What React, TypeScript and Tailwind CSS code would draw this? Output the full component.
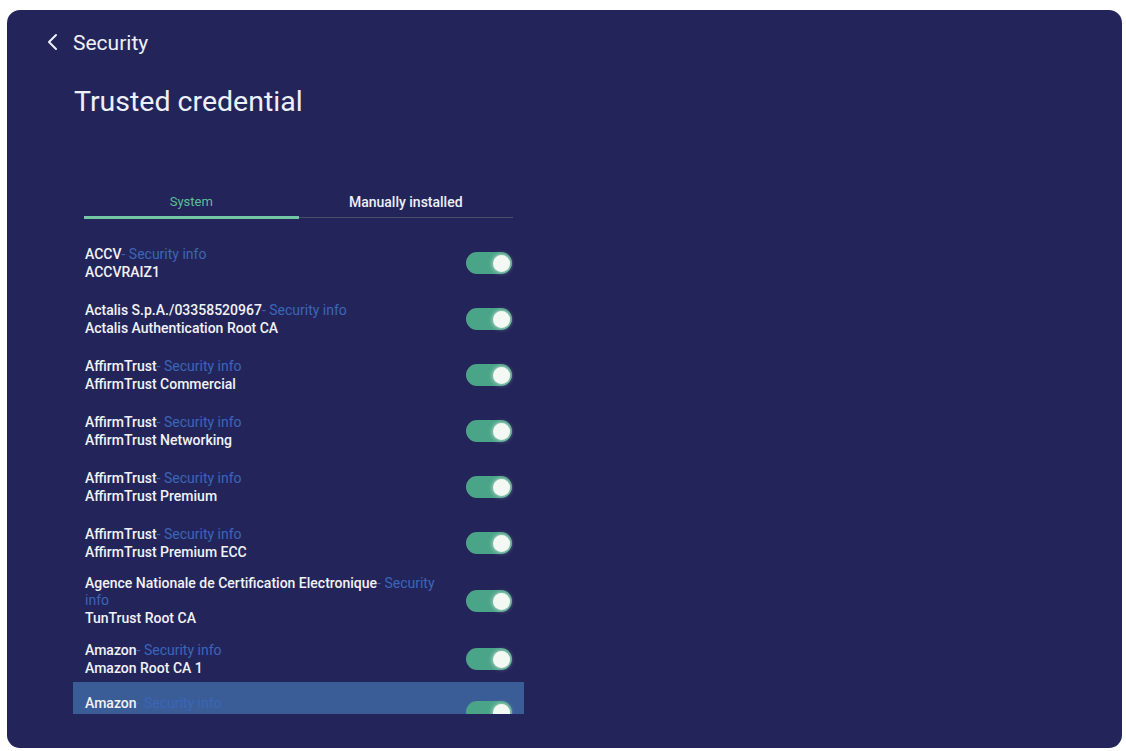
import React from "react";

type Credential = {
  issuer: string;
  name?: string;
};

const credentials: Credential[] = [
  { issuer: "ACCV", name: "ACCVRAIZ1" },
  { issuer: "Actalis S.p.A./03358520967", name: "Actalis Authentication Root CA" },
  { issuer: "AffirmTrust", name: "AffirmTrust Commercial" },
  { issuer: "AffirmTrust", name: "AffirmTrust Networking" },
  { issuer: "AffirmTrust", name: "AffirmTrust Premium" },
  { issuer: "AffirmTrust", name: "AffirmTrust Premium ECC" },
  { issuer: "Agence Nationale de Certification Electronique", name: "TunTrust Root CA" },
  { issuer: "Amazon", name: "Amazon Root CA 1" },
  { issuer: "Amazon" },
];

const Toggle: React.FC = () => (
  <div className="flex h-[22px] w-[46px] shrink-0 items-center justify-end rounded-full bg-[#4aa487] pr-[2px]">
    <div className="h-[17px] w-[17px] rounded-full bg-[#f4f8f2] shadow-[0_0_5px_rgba(255,255,255,0.75)]" />
  </div>
);

const CredentialRow: React.FC<{ item: Credential; focused?: boolean }> = ({ item, focused }) => (
  <div
    className={`flex min-h-[56px] items-center gap-4 px-[12px] ${
      focused ? "-mt-[5px] bg-[#3a5d97] pb-[4px] pt-[8px]" : "py-[4px]"
    }`}
  >
    <div className="flex-1 text-[14px] font-medium leading-[17px] text-[#f1f2f6]">
      <p>
        {item.issuer}
        <span className="font-normal text-[#3b66b8]">- Security info</span>
      </p>
      <p className="mt-[1px] h-[17px]">{item.name}</p>
    </div>
    <Toggle />
  </div>
);

export default function App() {
  return (
    <div className="h-[751px] w-[1126px] bg-white p-[7px] pt-[10px] pr-[4px] pb-[3px] font-['Roboto',sans-serif]">
      <div className="flex h-full flex-col rounded-[13px] bg-[#23255a] pl-[39px]">
        {/* header */}
        <div className="flex h-[66px] items-center pt-[1px]">
          <svg width="14" height="20" viewBox="0 0 14 20" fill="none" className="mt-[-2px]">
            <path d="M10 2 L3 9 L10 16" stroke="#eef0f8" strokeWidth="2" strokeLinecap="round" strokeLinejoin="round" />
          </svg>
          <span className="ml-[13px] text-[21px] text-[#eef0f8]">Security</span>
        </div>
        <h1 className="ml-[28px] mt-[10px] text-[28.5px] font-normal leading-[32px] text-[#eef0f8]">
          Trusted credential
        </h1>

        {/* tabs + list */}
        <div className="ml-[27px] mt-[75px] flex w-[451px] flex-col">
          <div className="mx-[11px] flex leading-[18px]">
            <div className="flex flex-1 flex-col items-center">
              <span className="pb-[5px] text-[13px] text-[#5cbf97]">System</span>
              <div className="h-[3px] w-full bg-[#74c7a4]" />
            </div>
            <div className="flex flex-1 flex-col items-center">
              <span className="pb-[5px] text-[14px] font-medium text-[#eef0f8]">Manually installed</span>
              <div className="mt-[1px] h-[1px] w-full bg-[#4b4f6a]" />
            </div>
          </div>
          <div className="mt-[16px] h-[479px] overflow-hidden">
            {credentials.map((item, i) => (
              <CredentialRow key={i} item={item} focused={i === credentials.length - 1} />
            ))}
          </div>
        </div>
      </div>
    </div>
  );
}
